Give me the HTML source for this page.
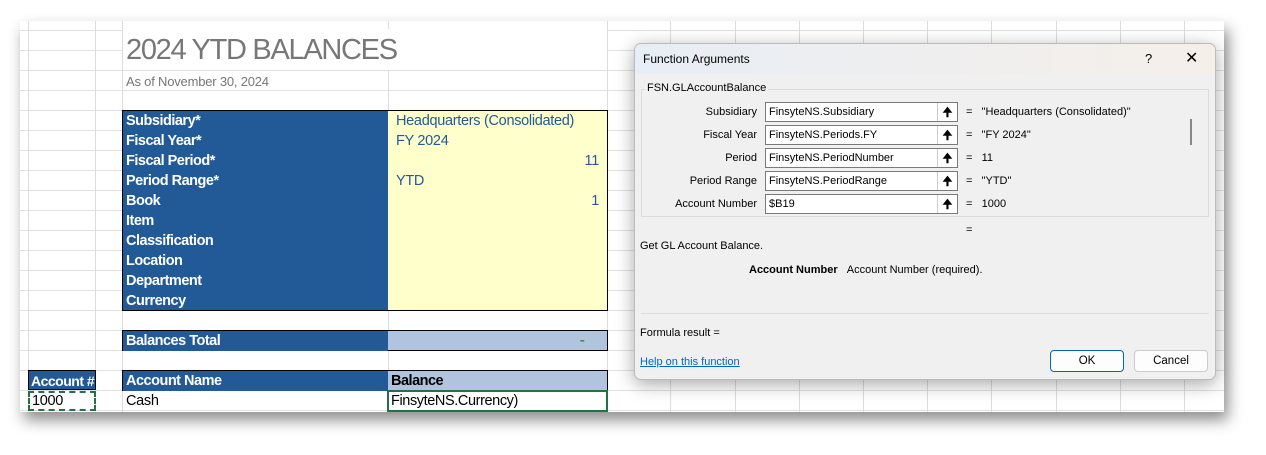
<!DOCTYPE html>
<html><head><meta charset="utf-8"><style>
*{margin:0;padding:0;box-sizing:border-box}
body{width:1266px;height:455px;background:#fff;position:relative;overflow:hidden;font-family:"Liberation Sans",sans-serif}
.sheet{position:absolute;left:20px;top:21px;width:1204px;height:391px;background:#fff;box-shadow:4px 8px 14px rgba(0,0,0,.45);overflow:hidden;
background-image:linear-gradient(#e1e1e1 1px,transparent 1px);background-size:100% 20px;background-position:0 9px}
.a{position:absolute}
.vl{position:absolute;top:0;height:391px;width:1px;background:#dcdcdc}
.blue{background:#215a96;color:#fff;font-weight:bold;font-size:14.5px;letter-spacing:-0.5px}
.lbl{height:20px;line-height:21px;padding-left:3px;white-space:nowrap;overflow:hidden}
.val{color:#215a96;font-size:14.5px;height:20px;line-height:21px;padding:0 8px;letter-spacing:-0.3px}
.dlg{position:absolute;left:634px;top:43px;width:582px;height:337px;background:#f0f0f0;border:1px solid #bbb;border-radius:7px;box-shadow:0 4px 18px rgba(0,0,0,.35);font-size:11px;color:#000;overflow:hidden}
.tb{height:30px;background:linear-gradient(90deg,#e8eef5,#f5efe9);line-height:30px;padding-left:8px;font-size:12px}
.in{position:absolute;left:130px;width:193px;height:20px;background:#fff;border:1px solid #7a7a7a;line-height:18px;padding-left:3px;font-size:11px}
.in b{position:absolute;right:0;top:0;width:20px;height:18px;border-left:1px solid #ccc;text-align:center;font-size:12px}
.rl{position:absolute;width:122px;text-align:right;font-size:11px}
.eq{position:absolute;left:331px;font-size:11px}
.btn{position:absolute;top:306px;width:74px;height:22px;border:1px solid #ccc;background:#fdfdfd;border-radius:4px;text-align:center;line-height:20px;font-size:11.5px}
</style></head><body>
<div class="sheet">
<div class="vl" style="left:8px"></div><div class="vl" style="left:75px"></div><div class="vl" style="left:102px"></div><div class="vl" style="left:368px"></div><div class="vl" style="left:587px"></div>
<div class="vl" style="left:650px"></div><div class="vl" style="left:715px"></div><div class="vl" style="left:779px"></div><div class="vl" style="left:843px"></div><div class="vl" style="left:907px"></div><div class="vl" style="left:971px"></div><div class="vl" style="left:1036px"></div><div class="vl" style="left:1100px"></div><div class="vl" style="left:1164px"></div>
<div class="a" style="left:103px;top:8px;width:484px;height:41px;background:#fff"></div>
<div class="a" style="left:106px;top:13px;font-size:29px;color:#777;letter-spacing:-1.3px">2024 YTD BALANCES</div>
<div class="a" style="left:106px;top:53px;font-size:13px;color:#777;letter-spacing:-0.2px">As of November 30, 2024</div>
<div class="a" style="left:102px;top:89px;width:486px;height:201px;border:1px solid #000;display:flex">
 <div class="blue" style="width:265px">
  <div class="lbl">Subsidiary*</div><div class="lbl">Fiscal Year*</div><div class="lbl">Fiscal Period*</div><div class="lbl">Period Range*</div><div class="lbl">Book</div><div class="lbl">Item</div><div class="lbl">Classification</div><div class="lbl">Location</div><div class="lbl">Department</div><div class="lbl">Currency</div>
 </div>
 <div style="flex:1;background:#ffffcc">
  <div class="val">Headquarters (Consolidated)</div><div class="val">FY 2024</div><div class="val" style="text-align:right">11</div><div class="val">YTD</div><div class="val" style="text-align:right">1</div>
 </div>
</div>
<div class="a" style="left:102px;top:309px;width:486px;height:21px;border:1px solid #000;display:flex">
 <div class="blue lbl" style="width:265px;line-height:21px">Balances Total</div><div style="flex:1;background:#b0c4de;text-align:right;padding-right:22px;color:#2a7a2a;line-height:19px">-</div>
</div>
<div class="a blue lbl" style="left:8px;top:349px;width:68px;border:1px solid #000;line-height:20px;font-size:14px;padding-left:2px">Account #</div>
<div class="a" style="left:102px;top:349px;width:486px;height:21px;border:1px solid #000;display:flex">
 <div class="blue lbl" style="width:265px;line-height:21px">Account Name</div><div style="flex:1;background:#b0c4de;font-weight:bold;font-size:14.5px;padding-left:3px;line-height:21px;letter-spacing:-0.5px">Balance</div>
</div>
<div class="a" style="left:8px;top:370px;width:68px;height:20px;border:2px dashed #217346;font-size:14.5px;line-height:17px;padding-left:2px;letter-spacing:-0.3px">1000</div>
<div class="a" style="left:106px;top:370px;font-size:14.5px;line-height:21px;letter-spacing:-0.3px">Cash</div>
<div class="a" style="left:367px;top:369px;width:221px;height:22px;border:2px solid #217346;background:#fff;font-size:14.5px;line-height:19px;padding-left:2px;letter-spacing:-0.4px">FinsyteNS.Currency)</div>
</div>

<div class="dlg">
<div class="tb">Function Arguments<span style="position:absolute;left:510px;top:0;font-size:13px">?</span><span style="position:absolute;left:550px;top:0;font-size:16px">✕</span></div>
<div class="a" style="left:6px;top:45px;width:568px;height:128px;border:1px solid #dcdcdc"></div>
<div class="a" style="left:10px;top:38px;background:#f0f0f0;padding:0 2px;font-size:11px">FSN.GLAccountBalance</div>
<div class="a" style="left:555px;top:75px;width:2px;height:26px;background:#888"></div>
<div class="rl" style="top:62px">Subsidiary</div><div class="in" style="top:58px">FinsyteNS.Subsidiary<b>🠉</b></div><div class="eq" style="top:62px">=&nbsp;&nbsp;&nbsp;"Headquarters (Consolidated)"</div>
<div class="rl" style="top:85px">Fiscal Year</div><div class="in" style="top:81px">FinsyteNS.Periods.FY<b>🠉</b></div><div class="eq" style="top:85px">=&nbsp;&nbsp;&nbsp;"FY 2024"</div>
<div class="rl" style="top:108px">Period</div><div class="in" style="top:104px">FinsyteNS.PeriodNumber<b>🠉</b></div><div class="eq" style="top:108px">=&nbsp;&nbsp;&nbsp;11</div>
<div class="rl" style="top:131px">Period Range</div><div class="in" style="top:127px">FinsyteNS.PeriodRange<b>🠉</b></div><div class="eq" style="top:131px">=&nbsp;&nbsp;&nbsp;"YTD"</div>
<div class="rl" style="top:154px">Account Number</div><div class="in" style="top:150px">$B19<b>🠉</b></div><div class="eq" style="top:154px">=&nbsp;&nbsp;&nbsp;1000</div>
<div class="eq" style="top:180px">=</div>
<div class="a" style="left:5px;top:196px">Get GL Account Balance.</div>
<div class="a" style="left:114px;top:220px"><b>Account Number</b>&nbsp;&nbsp;&nbsp;Account Number (required).</div>
<div class="a" style="left:6px;top:269px;width:568px;height:1px;background:#ddd"></div>
<div class="a" style="left:5px;top:283px">Formula result =</div>
<div class="a" style="left:5px;top:312px;color:#0066cc;text-decoration:underline">Help on this function</div>
<div class="btn" style="left:415px;border:1px solid #0067c0">OK</div>
<div class="btn" style="left:499px">Cancel</div>
</div>
</body></html>
